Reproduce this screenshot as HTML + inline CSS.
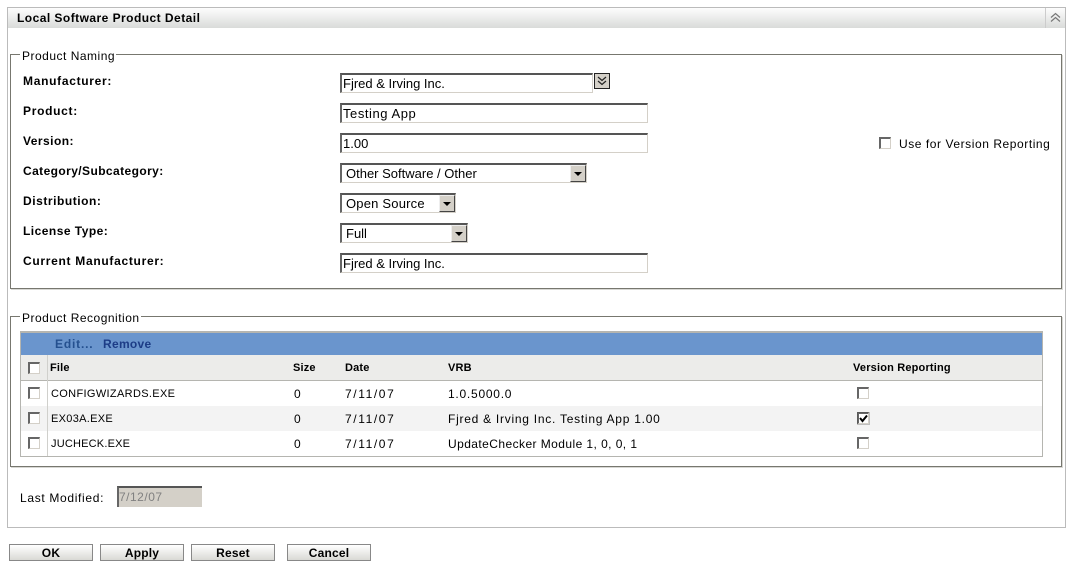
<!DOCTYPE html>
<html><head><meta charset="utf-8"><title>Local Software Product Detail</title>
<style>
html,body{margin:0;padding:0;background:#fff;width:1076px;height:580px;overflow:hidden}
body{position:relative;font-family:"Liberation Sans",sans-serif;font-size:12px;color:#000}
.a{position:absolute;box-sizing:border-box}
.t{position:absolute;white-space:nowrap;line-height:14px;height:14px;font-size:12px;letter-spacing:.7px}
.b{font-weight:bold}
.lb{font-weight:bold;left:23px;font-size:12px;letter-spacing:.7px}
.h{font-weight:bold;font-size:11px;letter-spacing:.18px;top:361px}
.fs{position:absolute;box-sizing:border-box;border:1px solid #77776f;box-shadow:1px 1px 0 #d8d8d4}
.lg{position:absolute;background:#fff;padding:0 1px 0 2px;left:20px;white-space:nowrap;line-height:14px;font-size:12px;letter-spacing:.5px}
.in{position:absolute;box-sizing:border-box;background:#fff;border:1px solid #d4d0c8;border-top:2px solid #555;border-left:2px solid #666;height:20px;font-family:"Liberation Sans",sans-serif;font-size:13px;line-height:18px;padding-left:1px;white-space:nowrap}
.sel{padding-left:4px}
.ar{position:absolute;top:0;right:0;width:16px;height:17px;background:#d4d0c8;border:1px solid;border-color:#eee #444 #444 #eee;box-sizing:border-box}
.ar:after{content:"";position:absolute;left:3px;top:6px;border:4px solid transparent;border-top:4px solid #000;border-bottom:0}
.cb{position:absolute;box-sizing:border-box;width:12px;height:12px;background:#fff;border:1px solid #d4d0c8;border-top:2px solid #666;border-left:2px solid #666}
.btn{position:absolute;box-sizing:border-box;top:544px;height:17px;width:84px;text-align:center;border:1px solid #888;background:linear-gradient(#fff,#d9d9d5);font-weight:bold;font-size:12px;line-height:16px;letter-spacing:.2px}
</style></head><body>
<div class="a" style="left:7px;top:7px;width:1059px;height:521px;border:1px solid #bbb"></div>
<div class="a" style="left:8px;top:8px;width:1057px;height:20px;background:linear-gradient(#fdfdfd,#d9dbd9)"></div>
<div class="a" style="left:1045px;top:8px;width:1px;height:20px;background:#ccc"></div>
<svg class="a" style="left:1049px;top:11px" width="13" height="13" viewBox="0 0 13 13"><path d="M2 6.5L6.5 2.5L11 6.5M2 10.5L6.5 6.5L11 10.5" fill="none" stroke="#777" stroke-width="1.2"/></svg>
<div class="t b" style="left:17px;top:11px;letter-spacing:.46px">Local Software Product Detail</div>

<div class="fs" style="left:10px;top:54px;width:1052px;height:235px"></div>
<div class="lg" style="top:49px">Product Naming</div>
<div class="t lb" style="top:74px">Manufacturer:</div>
<div class="t lb" style="top:104px">Product:</div>
<div class="t lb" style="top:134px;letter-spacing:.45px">Version:</div>
<div class="t lb" style="top:164px;letter-spacing:.41px">Category/Subcategory:</div>
<div class="t lb" style="top:194px;letter-spacing:.55px">Distribution:</div>
<div class="t lb" style="top:224px;letter-spacing:.47px">License Type:</div>
<div class="t lb" style="top:254px">Current Manufacturer:</div>

<div class="in" style="left:340px;top:73px;width:253px">Fjred &amp; Irving Inc.</div>
<div class="a" style="left:594px;top:73px;width:16px;height:16px;background:#d4d0c8;border:1px solid #222"></div>
<svg class="a" style="left:596px;top:75px" width="12" height="12" viewBox="0 0 12 12"><path d="M2 2L6 5.5L10 2M2 6L6 9.5L10 6" fill="none" stroke="#222" stroke-width="1.2"/></svg>
<div class="in" style="left:340px;top:103px;width:308px;letter-spacing:.55px">Testing App</div>
<div class="in" style="left:340px;top:133px;width:308px">1.00</div>
<div class="in sel" style="left:340px;top:163px;width:247px">Other Software / Other<span class="ar"></span></div>
<div class="in sel" style="left:340px;top:193px;width:116px;letter-spacing:.2px">Open Source<span class="ar"></span></div>
<div class="in sel" style="left:340px;top:223px;width:128px">Full<span class="ar"></span></div>
<div class="in" style="left:340px;top:253px;width:308px">Fjred &amp; Irving Inc.</div>
<div class="cb" style="left:879px;top:137px"></div>
<div class="t" style="left:899px;top:137px;letter-spacing:.56px">Use for Version Reporting</div>

<div class="fs" style="left:10px;top:316px;width:1052px;height:151px"></div>
<div class="lg" style="top:311px">Product Recognition</div>
<div class="a" style="left:20px;top:331px;width:1023px;height:126px;border:1px solid #b5b5b0;border-top-width:2px;background:#fff"></div>
<div class="a" style="left:21px;top:333px;width:1021px;height:22px;background:#6a95cd"></div>
<div class="t b" style="left:55px;top:337px;color:#24508f;letter-spacing:.83px">Edit...</div>
<div class="t b" style="left:103px;top:337px;color:#1c3c86;letter-spacing:.3px">Remove</div>
<div class="a" style="left:21px;top:355px;width:1021px;height:26px;background:#ececea;border-bottom:1px solid #b5b5b0"></div>
<div class="a" style="left:21px;top:406px;width:1021px;height:25px;background:#f3f3f3"></div>
<div class="a" style="left:47px;top:355px;width:1px;height:101px;background:#d0d0cc"></div>
<div class="cb" style="left:28px;top:362px"></div>
<div class="cb" style="left:28px;top:387px"></div>
<div class="cb" style="left:28px;top:412px"></div>
<div class="cb" style="left:28px;top:437px"></div>
<div class="t h" style="left:50px">File</div>
<div class="t h" style="left:293px">Size</div>
<div class="t h" style="left:345px">Date</div>
<div class="t h" style="left:448px">VRB</div>
<div class="t h" style="left:853px">Version Reporting</div>

<div class="t" style="left:51px;top:387px;font-size:11px;letter-spacing:.34px">CONFIGWIZARDS.EXE</div>
<div class="t" style="left:294px;top:387px">0</div>
<div class="t" style="left:345px;top:387px;letter-spacing:1.6px">7/11/07</div>
<div class="t" style="left:448px;top:387px;letter-spacing:.75px">1.0.5000.0</div>
<div class="cb" style="left:857px;top:387px"></div>

<div class="t" style="left:51px;top:412px;font-size:11px;letter-spacing:.3px">EX03A.EXE</div>
<div class="t" style="left:294px;top:412px">0</div>
<div class="t" style="left:345px;top:412px;letter-spacing:1.6px">7/11/07</div>
<div class="t" style="left:448px;top:412px;letter-spacing:.74px">Fjred &amp; Irving Inc. Testing App 1.00</div>
<div class="cb" style="left:857px;top:412px"></div>
<svg class="a" style="left:857px;top:412px" width="13" height="13" viewBox="0 0 13 13"><path d="M3 6L5.5 9L10 3.5" fill="none" stroke="#000" stroke-width="2"/><rect x=".5" y=".5" width="12" height="12" fill="none" stroke="#333" stroke-width="1" stroke-dasharray="1 1" opacity=".55"/></svg>

<div class="t" style="left:51px;top:437px;font-size:11px;letter-spacing:.2px">JUCHECK.EXE</div>
<div class="t" style="left:294px;top:437px">0</div>
<div class="t" style="left:345px;top:437px;letter-spacing:1.6px">7/11/07</div>
<div class="t" style="left:448px;top:437px;letter-spacing:.43px">UpdateChecker Module 1, 0, 0, 1</div>
<div class="cb" style="left:857px;top:437px"></div>

<div class="t" style="left:20px;top:491px;letter-spacing:.67px">Last Modified:</div>
<div class="a" style="left:117px;top:486px;width:85px;height:21px;background:#d4d0c8;border-top:2px solid #555;border-left:2px solid #666;font-size:12px;line-height:18px;color:#808080;padding-left:0;letter-spacing:.5px">7/12/07</div>

<div class="btn" style="left:9px">OK</div>
<div class="btn" style="left:100px">Apply</div>
<div class="btn" style="left:191px">Reset</div>
<div class="btn" style="left:287px">Cancel</div>
</body></html>
